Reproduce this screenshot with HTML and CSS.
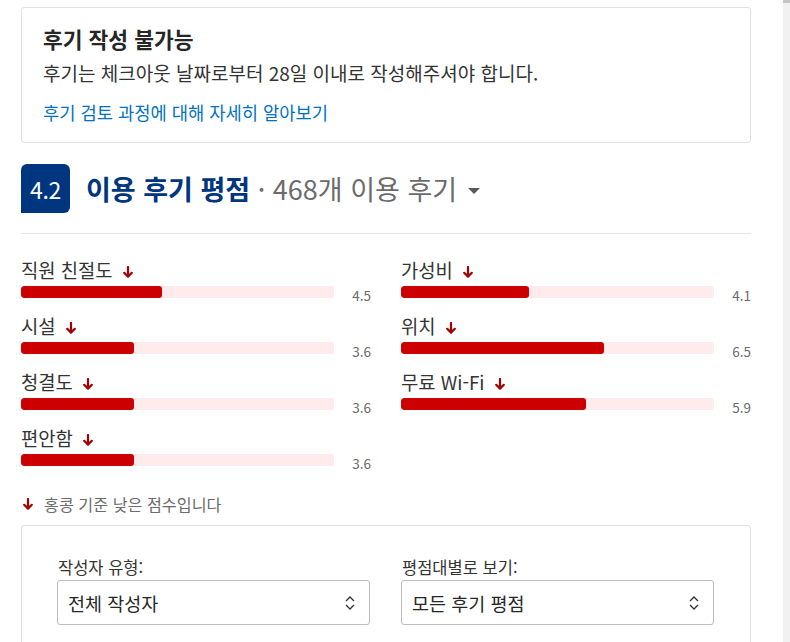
FILE: index.html
```html
<!DOCTYPE html>
<html lang="ko">
<head>
<meta charset="utf-8">
<title>이용 후기</title>
<link rel="stylesheet" href="styles.css">
</head>
<body>
<div class="scrollbar"><div class="thumb"></div></div>
<main class="page">
  <section class="notice">
    <h2 class="notice-title">후기 작성 불가능</h2>
    <p class="notice-text">후기는 체크아웃 날짜로부터 28일 이내로 작성해주셔야 합니다.</p>
    <a class="notice-link" href="#">후기 검토 과정에 대해 자세히 알아보기</a>
  </section>

  <header class="score-head">
    <div class="badge">4.2</div>
    <h2 class="score-title"><span class="strong">이용 후기 평점</span><span class="count"> · 468개 이용 후기</span><span class="caret"></span></h2>
  </header>

  <section class="ratings">
    <div class="col">
      <div class="item">
        <div class="label"><span>직원 친절도</span><svg class="down" viewBox="0 0 10 12"><path d="M5 1V10.5M1.2 6.8L5 10.6L8.8 6.8"/></svg></div>
        <div class="row"><div class="track"><div class="fill" style="width:45%"></div></div><span class="val">4.5</span></div>
      </div>
      <div class="item">
        <div class="label"><span>시설</span><svg class="down" viewBox="0 0 10 12"><path d="M5 1V10.5M1.2 6.8L5 10.6L8.8 6.8"/></svg></div>
        <div class="row"><div class="track"><div class="fill" style="width:36%"></div></div><span class="val">3.6</span></div>
      </div>
      <div class="item">
        <div class="label"><span>청결도</span><svg class="down" viewBox="0 0 10 12"><path d="M5 1V10.5M1.2 6.8L5 10.6L8.8 6.8"/></svg></div>
        <div class="row"><div class="track"><div class="fill" style="width:36%"></div></div><span class="val">3.6</span></div>
      </div>
      <div class="item">
        <div class="label"><span>편안함</span><svg class="down" viewBox="0 0 10 12"><path d="M5 1V10.5M1.2 6.8L5 10.6L8.8 6.8"/></svg></div>
        <div class="row"><div class="track"><div class="fill" style="width:36%"></div></div><span class="val">3.6</span></div>
      </div>
    </div>
    <div class="col">
      <div class="item">
        <div class="label"><span>가성비</span><svg class="down" viewBox="0 0 10 12"><path d="M5 1V10.5M1.2 6.8L5 10.6L8.8 6.8"/></svg></div>
        <div class="row"><div class="track"><div class="fill" style="width:41%"></div></div><span class="val">4.1</span></div>
      </div>
      <div class="item">
        <div class="label"><span>위치</span><svg class="down" viewBox="0 0 10 12"><path d="M5 1V10.5M1.2 6.8L5 10.6L8.8 6.8"/></svg></div>
        <div class="row"><div class="track"><div class="fill" style="width:65%"></div></div><span class="val">6.5</span></div>
      </div>
      <div class="item">
        <div class="label"><span>무료 Wi-Fi</span><svg class="down" viewBox="0 0 10 12"><path d="M5 1V10.5M1.2 6.8L5 10.6L8.8 6.8"/></svg></div>
        <div class="row"><div class="track"><div class="fill" style="width:59%"></div></div><span class="val">5.9</span></div>
      </div>
    </div>
  </section>

  <p class="note"><svg class="down" viewBox="0 0 10 12"><path d="M5 1V10.5M1.2 6.8L5 10.6L8.8 6.8"/></svg><span>홍콩 기준 낮은 점수입니다</span></p>

  <section class="filters">
    <div class="field">
      <label class="field-label">작성자 유형:</label>
      <div class="select"><span>전체 작성자</span><svg class="updown" viewBox="0 0 12 16"><path d="M2 6L6 2L10 6M2 10L6 14L10 10"/></svg></div>
    </div>
    <div class="field">
      <label class="field-label">평점대별로 보기:</label>
      <div class="select"><span>모든 후기 평점</span><svg class="updown" viewBox="0 0 12 16"><path d="M2 6L6 2L10 6M2 10L6 14L10 10"/></svg></div>
    </div>
  </section>
</main>
</body>
</html>
```

FILE: styles.css
```css
* { box-sizing: border-box; }
html, body { margin: 0; padding: 0; background: #fff; }
body {
  font-family: "Noto Sans CJK KR", "Noto Sans", sans-serif;
  color: #333;
  overflow: hidden;
}
.scrollbar {
  position: fixed;
  top: 0;
  right: 0;
  width: 7px;
  height: 100%;
  background: #f1f1f1;
}
.thumb { height: 3px; background: #c4c4c4; }

.page {
  width: 730px;
  margin: 7px 0 0 21px;
}

.notice {
  border: 1px solid #e0e0e0;
  border-radius: 3px;
  padding: 18px 21px 18px;
  height: 136px;
}
.notice-title {
  margin: 0;
  font-size: 21.5px;
  line-height: 26px;
  font-weight: 700;
  color: #262626;
}
.notice-text {
  margin: 9px 0 0;
  font-size: 19px;
  line-height: 24px;
  color: #333;
}
.notice-link {
  display: block;
  margin-top: 16px;
  font-size: 17.7px;
  line-height: 22px;
  color: #0071c2;
  text-decoration: none;
}

.score-head {
  display: flex;
  align-items: center;
  gap: 16px;
  margin-top: 21px;
  padding-bottom: 20px;
  border-bottom: 1px solid #e6e6e6;
}
.badge {
  width: 49px;
  height: 49px;
  background: #003580;
  color: #fff;
  border-radius: 6px 6px 6px 0;
  display: flex;
  align-items: center;
  justify-content: center;
  font-size: 23px;
  letter-spacing: -0.3px;
}
.score-title {
  margin: 0;
  font-size: 27px;
  line-height: 32px;
  font-weight: 400;
  display: flex;
  align-items: center;
  white-space: pre;
}
.score-title .strong { font-weight: 700; color: #003580; }
.score-title .count { color: #6b6b6b; }
.caret {
  width: 0;
  height: 0;
  margin-left: 11px;
  margin-top: 5px;
  border-left: 6.5px solid transparent;
  border-right: 6.5px solid transparent;
  border-top: 6px solid #595959;
}

.ratings {
  display: grid;
  grid-template-columns: 350px 350px;
  column-gap: 30px;
  margin-top: 25px;
}
.col { display: flex; flex-direction: column; gap: 17px; }
.item { display: flex; flex-direction: column; gap: 5px; }
.label {
  display: flex;
  align-items: center;
  gap: 10px;
  font-size: 18.8px;
  line-height: 22px;
  color: #333;
  white-space: pre;
}
.down {
  width: 10px;
  height: 12px;
  fill: none;
  stroke: #a30000;
  stroke-width: 2.2;
  stroke-linecap: round;
  stroke-linejoin: round;
  flex: none;
}
.label .down { margin-top: 3px; }
.row { display: flex; align-items: center; height: 12px; }
.track {
  width: 313px;
  height: 12px;
  background: #ffebeb;
  border-radius: 3px;
  overflow: hidden;
}
.fill { height: 100%; background: #cc0000; border-radius: 3px; }
.val {
  flex: 1;
  text-align: right;
  font-size: 13.5px;
  color: #6b6b6b;
  line-height: 12px;
  margin-top: 5px;
}

.note {
  display: flex;
  align-items: center;
  gap: 11px;
  margin: 28px 0 0 2px;
  font-size: 16.2px;
  line-height: 20px;
  color: #6b6b6b;
}

.filters {
  margin-top: 11px;
  border: 1px solid #e0e0e0;
  border-radius: 3px;
  padding: 31px 36px 30px 35px;
  display: grid;
  grid-template-columns: 313px 313px;
  column-gap: 31px;
}
.field-label {
  display: block;
  font-size: 16.5px;
  line-height: 20px;
  color: #333;
  padding-left: 1px;
}
.select {
  margin-top: 3px;
  height: 45px;
  border: 1px solid #bdbdbd;
  border-radius: 3px;
  display: flex;
  align-items: center;
  justify-content: space-between;
  padding: 0 13px 0 10px;
  font-size: 18.5px;
  color: #262626;
}
.updown {
  width: 12px;
  height: 16px;
  fill: none;
  stroke: #333;
  stroke-width: 1.3;
}
```
